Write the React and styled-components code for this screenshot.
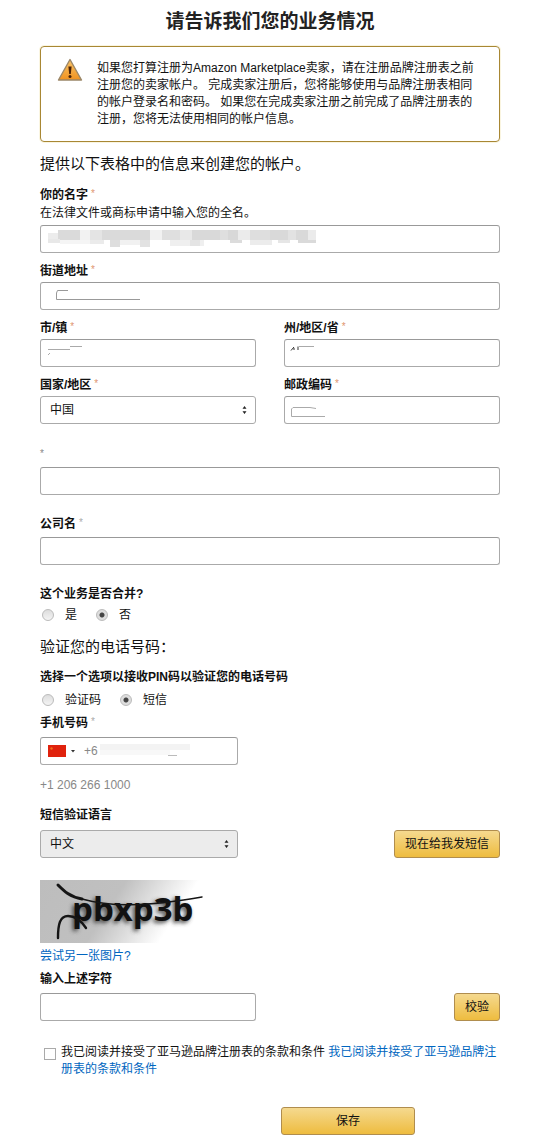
import React, { useState } from 'react';
import styled, { createGlobalStyle } from 'styled-components';

const GlobalStyle = createGlobalStyle`
  * {
    box-sizing: border-box;
  }
  body {
    margin: 0;
    background: #fff;
    color: #111;
    font: 12px/18px "Liberation Sans", "Noto Sans CJK SC", sans-serif;
  }
  button, input, select {
    font: inherit;
    color: inherit;
    margin: 0;
  }
`;

const Page = styled.form`
  display: flex;
  flex-direction: column;
  padding: 8px 40px 6px;
`;

const Title = styled.h1`
  margin: 0 0 10px;
  font-size: 19px;
  line-height: 28px;
  text-align: center;
  color: #222;
`;

const Alert = styled.div`
  display: flex;
  align-items: flex-start;
  gap: 14px;
  padding: 13px 20px 13px 16px;
  min-height: 96px;
  border: 1px solid #a88734;
  border-radius: 4px;
  box-shadow: 0 0 0 1px #faf5e0;
`;

const WarningSvg = styled.svg`
  flex: none;
  margin-top: -2px;
`;

const AlertText = styled.p`
  margin: 0;
  line-height: 17px;
`;

const Heading = styled.h2`
  margin: ${props => props.$top}px 0 0;
  font-size: 15px;
  font-weight: normal;
  line-height: 20px;
`;

const Field = styled.div`
  display: flex;
  flex-direction: column;
  gap: ${props => props.$gap || 2}px;
  margin-top: ${props => props.$top || 9}px;
`;

const Label = styled.label`
  display: block;
  min-height: 18px;
  font-weight: bold;
`;

const Legend = styled.legend`
  padding: 0;
  font-weight: bold;
`;

const Star = styled.span`
  margin-left: ${props => (props.$alone ? 0 : 3)}px;
  font-size: 10px;
  line-height: 10px;
  vertical-align: 2px;
  font-weight: normal;
  color: ${props => props.$color || '#e0966f'};
`;

const Columns = styled.div`
  display: grid;
  grid-template-columns: 1fr 1fr;
  column-gap: 28px;
`;

const Box = styled.div`
  position: relative;
  width: ${props => props.$width || '100%'};
`;

const Input = styled.input`
  display: block;
  width: 100%;
  height: 28px;
  padding: 0 8px;
  border: 1px solid #aaa;
  border-top-color: #999;
  border-radius: 3px;
  background: #fff;
  outline: none;
`;

const PhoneInput = styled(Input)`
  padding-left: 43px;
  color: #888;
`;

const Select = styled.select`
  display: block;
  width: 100%;
  height: 28px;
  padding: 0 9px;
  appearance: none;
  border: 1px solid #aaa;
  border-radius: 3px;
  background: ${props => props.$fill || '#fff'};
`;

const Overlay = styled.svg`
  position: absolute;
  top: 0;
  left: 0;
  pointer-events: none;
`;

const Caret = styled.svg`
  position: absolute;
  top: 9px;
  right: 8px;
  pointer-events: none;
`;

const Choices = styled.fieldset`
  margin: ${props => props.$top}px 0 0;
  padding: 0;
  border: 0;
`;

const ChoiceRow = styled.div`
  display: flex;
  gap: 19px;
  margin-top: ${props => props.$top}px;
  padding-left: 2px;
`;

const Choice = styled.label`
  display: flex;
  align-items: center;
  gap: 11px;
`;

const Radio = styled.input`
  width: 12px;
  height: 12px;
  appearance: none;
  border: 1px solid #bbb;
  border-radius: 50%;
  background: linear-gradient(#ddd, #f4f4f4);
  &:checked {
    background: radial-gradient(circle, #444 0 2px, #ddd 3px);
  }
`;

const Note = styled.p`
  margin: 11px 0 0;
  color: #888;
`;

const Row = styled.div`
  display: flex;
  align-items: center;
  justify-content: space-between;
`;

const Button = styled.button`
  height: 28px;
  width: ${props => props.$width || 'auto'};
  padding: 0 10px;
  border: 1px solid #b08d4e;
  border-radius: 3px;
  background: linear-gradient(#f5d98f, #eebc3f);
`;

const Link = styled.a`
  color: #0066c0;
  text-decoration: none;
`;

const CaptchaSvg = styled.svg`
  display: block;
  margin: 22px 0 4px;
`;

const Terms = styled.div`
  display: flex;
  align-items: flex-start;
  gap: 5px;
  margin-top: 23px;
  padding-left: 4px;
  line-height: 17px;
`;

const Checkbox = styled.input`
  flex: none;
  width: 12px;
  height: 12px;
  margin-top: 4px;
  appearance: none;
  border: 1px solid #aaa;
  background: #fff;
  &:checked {
    background: #888;
  }
`;

const Footer = styled.div`
  display: flex;
  justify-content: flex-end;
  margin-top: 29px;
  padding-right: 85px;
`;

const WarningIcon = () => (
  <WarningSvg width="26" height="24" viewBox="0 0 26 24" aria-hidden="true">
    <defs>
      <linearGradient id="warn" x1="0" y1="0" x2="0" y2="1">
        <stop offset="0" stopColor="#f9c46a" />
        <stop offset="1" stopColor="#f0921f" />
      </linearGradient>
    </defs>
    <path d="M13 1.5 24.5 22H1.5Z" fill="url(#warn)" stroke="#9b8768" strokeWidth="1.4" strokeLinejoin="round" />
    <path d="M11.4 8.5h3.2l-.8 7.5h-1.6Z" fill="#4a2206" />
    <circle cx="13" cy="18.4" r="1.5" fill="#4a2206" />
  </WarningSvg>
);

const Arrows = () => (
  <Caret width="7" height="10" viewBox="0 0 7 10" aria-hidden="true">
    <path d="M3.5 1 5.5 3.8H1.5ZM3.5 9 5.5 6.2H1.5Z" fill="#222" />
  </Caret>
);

// hidden name: x, y, width, height, fill
const nameBlocks = [
  [8, 8, 10, 6, '#ececec'],
  [18, 5, 22, 10, '#dadada'],
  [40, 5, 10, 10, '#f2f2f2'],
  [50, 5, 12, 10, '#e4e4e4'],
  [62, 5, 48, 10, '#dadada'],
  [110, 5, 12, 10, '#f1f1f1'],
  [122, 5, 18, 10, '#dfdfdf'],
  [140, 5, 12, 10, '#e8e8e8'],
  [152, 5, 28, 10, '#d9d9d9'],
  [180, 5, 8, 10, '#dfdfdf'],
  [188, 5, 10, 10, '#d8d8d8'],
  [198, 5, 12, 10, '#ebebeb'],
  [210, 5, 20, 10, '#dedede'],
  [230, 5, 18, 10, '#d9d9d9'],
  [248, 5, 8, 10, '#e2e2e2'],
  [256, 5, 12, 10, '#d9d9d9'],
  [268, 5, 8, 10, '#ebebeb'],
  [8, 14, 12, 4, '#e8e8e8'],
  [20, 15, 30, 4, '#f5f5f5'],
  [50, 15, 14, 4, '#ebebeb'],
  [70, 15, 10, 7, '#dedede'],
  [80, 15, 20, 5, '#f1f1f1'],
  [100, 15, 10, 7, '#e2e2e2'],
  [130, 15, 34, 6, '#efefef'],
  [150, 15, 10, 6, '#e4e4e4'],
  [190, 15, 12, 3, '#dcdcdc'],
  [210, 15, 22, 5, '#ececec'],
  [238, 15, 12, 3, '#e6e6e6'],
  [258, 15, 18, 3, '#dadada'],
];

const Captcha = () => (
  <CaptchaSvg width="163" height="63" viewBox="0 0 163 63" role="img" aria-label="验证图片">
    <defs>
      <linearGradient id="fade" x1="0" y1="0" x2="1" y2="0.25">
        <stop offset="0" stopColor="#bdbdbd" />
        <stop offset="0.5" stopColor="#c0c0c0" />
        <stop offset="0.92" stopColor="#fff" />
      </linearGradient>
      <filter id="soft" x="-10%" y="-30%" width="120%" height="160%">
        <feGaussianBlur stdDeviation="2" />
      </filter>
    </defs>
    <rect width="163" height="63" fill="url(#fade)" />
    <g fontFamily="'Open Sans', 'Noto Sans', sans-serif" fontWeight="bold" fontSize="33">
      <text x="30" y="43" fill="#444" filter="url(#soft)">pbxp3b</text>
      <text x="32" y="41" fill="#111">pbxp3b</text>
    </g>
    <g fill="none" stroke="#151515" strokeLinecap="round">
      <path d="M18 5C24 11 30 17 42 19" strokeWidth="3" />
      <path d="M42 19C70 27 105 27 162 17" strokeWidth="1.5" />
      <path d="M18 58C18 44 20 36 28 36C36 36 42 42 46 48" strokeWidth="2.4" />
    </g>
  </CaptchaSvg>
);

export default function App() {
  const [incorporated, setIncorporated] = useState('no');
  const [method, setMethod] = useState('sms');

  return (
    <Page onSubmit={e => e.preventDefault()}>
      <GlobalStyle />
      <Title>请告诉我们您的业务情况</Title>
      <Alert>
        <WarningIcon />
        <AlertText>
          如果您打算注册为Amazon Marketplace卖家，请在注册品牌注册表之前注册您的卖家帐户。 完成卖家注册后，您将能够使用与品牌注册表相同的帐户登录名和密码。 如果您在完成卖家注册之前完成了品牌注册表的注册，您将无法使用相同的帐户信息。
        </AlertText>
      </Alert>
      <Heading $top={12}>提供以下表格中的信息来创建您的帐户。</Heading>

      <Field $top={12} $gap={3}>
        <div>
          <Label htmlFor="name">你的名字<Star>*</Star></Label>
          <div>在法律文件或商标申请中输入您的全名。</div>
        </div>
        <Box>
          <Input id="name" />
          <Overlay width="290" height="28" aria-hidden="true">
            {nameBlocks.map(([x, y, w, h, fill]) => (
              <rect key={`${x}-${y}`} x={x} y={y} width={w} height={h} fill={fill} />
            ))}
          </Overlay>
        </Box>
      </Field>

      <Field>
        <Label htmlFor="street">街道地址<Star>*</Star></Label>
        <Box>
          <Input id="street" />
          <Overlay width="110" height="28" aria-hidden="true">
            <path d="M28 8.5H17.5L16.5 11V17.5H100" fill="none" stroke="#999" />
          </Overlay>
        </Box>
      </Field>

      <Columns>
        <Field>
          <Label htmlFor="city">市/镇<Star>*</Star></Label>
          <Box>
            <Input id="city" />
            <Overlay width="60" height="28" aria-hidden="true">
              <path d="M8 10.5H30M30 7.5H42M8 16L10 14" fill="none" stroke="#aaa" />
            </Overlay>
          </Box>
        </Field>
        <Field>
          <Label htmlFor="state">州/地区/省<Star>*</Star></Label>
          <Box>
            <Input id="state" />
            <Overlay width="60" height="28" aria-hidden="true">
              <path d="M15 7.5H30" fill="none" stroke="#aaa" />
              <path d="M7 11.5L10 8M10 9V11M14 7.5V11" fill="none" stroke="#333" />
            </Overlay>
          </Box>
        </Field>
        <Field>
          <Label htmlFor="country">国家/地区<Star>*</Star></Label>
          <Box>
            <Select id="country">
              <option>中国</option>
            </Select>
            <Arrows />
          </Box>
        </Field>
        <Field>
          <Label htmlFor="zip">邮政编码<Star>*</Star></Label>
          <Box>
            <Input id="zip" />
            <Overlay width="60" height="28" aria-hidden="true">
              <path d="M32 12.5L26 11.5H9L7.5 13V20.5H30L41 20.5" fill="none" stroke="#aaa" />
            </Overlay>
          </Box>
        </Field>
      </Columns>

      <Field $top={22} $gap={3}>
        <Label htmlFor="extra"><Star $alone $color="#888">*</Star></Label>
        <Input id="extra" />
      </Field>
      <Field $top={20} $gap={4}>
        <Label htmlFor="company">公司名<Star $color="#aaa">*</Star></Label>
        <Input id="company" />
      </Field>

      <Choices $top={20}>
        <Legend>这个业务是否合并?</Legend>
        <ChoiceRow $top={3}>
          <Choice>
            <Radio type="radio" name="inc" checked={incorporated === 'yes'} onChange={() => setIncorporated('yes')} />
            是
          </Choice>
          <Choice>
            <Radio type="radio" name="inc" checked={incorporated === 'no'} onChange={() => setIncorporated('no')} />
            否
          </Choice>
        </ChoiceRow>
      </Choices>

      <Heading $top={13}>验证您的电话号码：</Heading>

      <Choices $top={11}>
        <Legend>选择一个选项以接收PIN码以验证您的电话号码</Legend>
        <ChoiceRow $top={5}>
          <Choice>
            <Radio type="radio" name="method" checked={method === 'voice'} onChange={() => setMethod('voice')} />
            验证码
          </Choice>
          <Choice>
            <Radio type="radio" name="method" checked={method === 'sms'} onChange={() => setMethod('sms')} />
            短信
          </Choice>
        </ChoiceRow>
      </Choices>

      <Field $top={5} $gap={5}>
        <Label htmlFor="phone">手机号码<Star $color="#aaa">*</Star></Label>
        <Box $width="43%">
          <PhoneInput id="phone" defaultValue="+6" />
          <Overlay width="160" height="28" aria-hidden="true">
            <rect x="8" y="8" width="18" height="12" fill="#e0220d" />
            <circle cx="11.5" cy="11.5" r="1.2" fill="#f0701b" />
            <path d="M31 13H35L33 15.5Z" fill="#333" />
            <rect x="60" y="7" width="90" height="6" fill="#f3f3f3" />
            <rect x="60" y="13" width="70" height="5" fill="#f8f8f8" />
            <path d="M128 18.5H137" stroke="#bbb" />
          </Overlay>
        </Box>
      </Field>
      <Note>+1 206 266 1000</Note>

      <Field $top={12} $gap={6}>
        <Label htmlFor="lang">短信验证语言</Label>
        <Row>
          <Box $width="43%">
            <Select id="lang" $fill="#ececec">
              <option>中文</option>
            </Select>
            <Arrows />
          </Box>
          <Button type="button">现在给我发短信</Button>
        </Row>
      </Field>

      <Captcha />
      <div><Link href="#captcha">尝试另一张图片?</Link></div>
      <Field $top={5} $gap={5}>
        <Label htmlFor="chars">输入上述字符</Label>
        <Row>
          <Box $width="47%">
            <Input id="chars" />
          </Box>
          <Button type="button">校验</Button>
        </Row>
      </Field>

      <Terms>
        <Checkbox type="checkbox" id="terms" />
        <div>
          <label htmlFor="terms">我已阅读并接受了亚马逊品牌注册表的条款和条件</label>{' '}
          <Link href="#terms">我已阅读并接受了亚马逊品牌注册表的条款和条件</Link>
        </div>
      </Terms>

      <Footer>
        <Button type="submit" $width="134px">保存</Button>
      </Footer>
    </Page>
  );
}
